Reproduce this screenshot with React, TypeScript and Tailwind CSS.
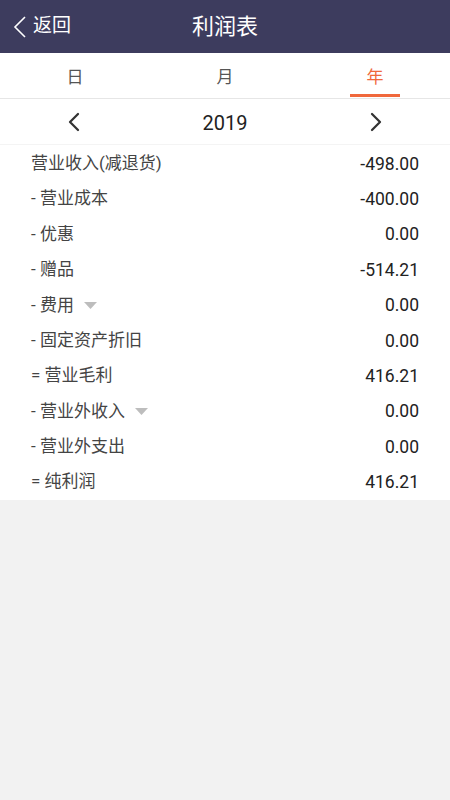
import { ChevronLeft, ChevronRight } from "lucide-react";

const rows = [
  { label: "营业收入(减退货)", value: "-498.00" },
  { label: "- 营业成本", value: "-400.00" },
  { label: "- 优惠", value: "0.00" },
  { label: "- 赠品", value: "-514.21" },
  { label: "- 费用", value: "0.00", drop: true },
  { label: "- 固定资产折旧", value: "0.00" },
  { label: "= 营业毛利", value: "416.21" },
  { label: "- 营业外收入", value: "0.00", drop: true },
  { label: "- 营业外支出", value: "0.00" },
  { label: "= 纯利润", value: "416.21" },
];

const font = {
  fontFamily: '"Roboto", "Noto Sans CJK SC", sans-serif',
};

export default function App() {
  return (
    <div className="w-[450px] min-h-[800px] bg-[#f2f2f2]" style={font}>
      <div className="relative h-[53px] bg-[#3d3c5e] flex items-center justify-center">
        <div className="absolute left-[13px] top-0 h-full flex items-center text-white">
          <svg width="14" height="22" viewBox="0 0 14 22" fill="none">
            <polyline points="12,1 2,11 12,21" stroke="white" strokeWidth="1.6" />
          </svg>
          <span className="text-[19px] ml-[6px]">返回</span>
        </div>
        <span className="text-white text-[22px]">利润表</span>
      </div>

      <div className="bg-white grid grid-cols-3 h-[46px] border-b border-[#e6e6e6]">
        <div className="flex items-center justify-center pt-[5px] text-[17px] text-[#555]">日</div>
        <div className="flex items-center justify-center pt-[5px] text-[17px] text-[#555]">月</div>
        <div className="relative flex items-center justify-center pt-[5px] text-[17px] text-[#f0683c]">
          年
          <span className="absolute bottom-[1px] left-1/2 -translate-x-1/2 w-[50px] h-[3px] bg-[#f0683c]" />
        </div>
      </div>

      <div className="bg-white h-[46px] flex items-center justify-between px-[58px] border-b border-[#f4f4f4]">
        <ChevronLeft className="w-[32px] h-[32px] text-[#333]" strokeWidth={1.7} />
        <span className="text-[20px] text-[#222] pt-[2px]">2019</span>
        <ChevronRight className="w-[32px] h-[32px] text-[#333]" strokeWidth={1.7} />
      </div>

      <div className="bg-white px-[31px] pt-[1px]">
        {rows.map((r) => (
          <div key={r.label} className="h-[35.4px] flex items-center justify-between text-[17px]">
            <div className="flex items-center text-[#444]">
              <span>{r.label}</span>
              {r.drop && (
                <svg width="13" height="7" viewBox="0 0 13 7" className="ml-[10px]">
                  <polygon points="0,0 13,0 6.5,7" fill="#bdbdbd" />
                </svg>
              )}
            </div>
            <span className="text-[#222] text-[17.5px]">{r.value}</span>
          </div>
        ))}
      </div>
    </div>
  );
}
